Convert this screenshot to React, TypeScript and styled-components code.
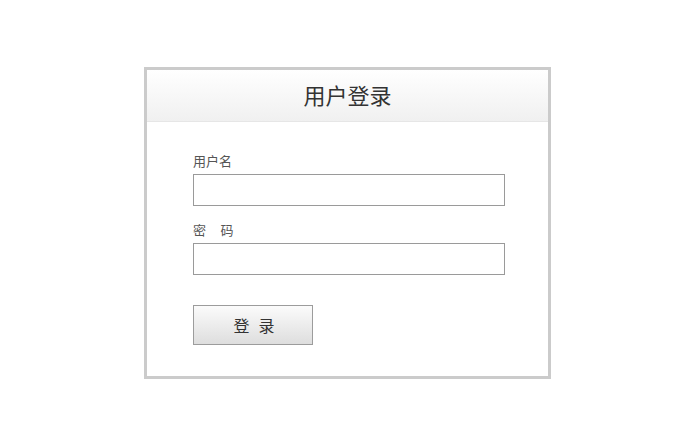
import React from 'react';
import styled, {createGlobalStyle} from 'styled-components';

const GlobalStyle = createGlobalStyle`
  html, body {
    margin: 0;
    padding: 0;
    background: #fff;
    font-family: "Liberation Sans", "Noto Sans CJK SC", sans-serif;
  }
`;

const Page = styled.div`
  width: 690px;
  height: 428px;
  padding: 67px 0 0 144px;
  box-sizing: border-box;
`;

const Card = styled.div`
  width: 407px;
  height: 312px;
  box-sizing: border-box;
  border: 3px solid #cbcbcb;
  background: #fff;
  display: flex;
  flex-direction: column;
`;

const Header = styled.div`
  height: 52px;
  display: flex;
  align-items: center;
  justify-content: center;
  background: linear-gradient(to bottom, #ffffff, #f0f0f0);
  border-bottom: 1px solid #e6e6e6;
  font-size: 22px;
  color: #333;
  padding-bottom: 3px;
  box-sizing: border-box;
`;

const Body = styled.form`
  padding: 31px 0 0 46px;
  display: flex;
  flex-direction: column;
`;

const Label = styled.label`
  font-size: 13px;
  color: #555;
  line-height: 18px;
  height: 18px;
  margin-bottom: 3px;
  white-space: pre;
`;

const Input = styled.input`
  width: 312px;
  height: 32px;
  box-sizing: border-box;
  border: 1px solid #9a9a9a;
  outline: none;
  margin: 0 0 16px;
  padding: 0 6px;
  font-size: 14px;
`;

const SubmitButton = styled.button`
  width: 120px;
  height: 40px;
  margin-top: 14px;
  padding: 0 0 0 2px;
  box-sizing: border-box;
  border: 1px solid #9c9c9c;
  background: linear-gradient(to bottom, #fbfbfb, #dedede);
  font-family: inherit;
  font-size: 16px;
  color: #333;
  white-space: pre;
  cursor: pointer;
`;

export default function App() {
  return (
    <>
      <GlobalStyle />
      <Page>
        <Card>
          <Header>用户登录</Header>
          <Body onSubmit={(e) => e.preventDefault()}>
            <Label>用户名</Label>
            <Input type="text" />
            <Label>{'密    码'}</Label>
            <Input type="password" />
            <SubmitButton type="submit">{'登  录'}</SubmitButton>
          </Body>
        </Card>
      </Page>
    </>
  );
}
